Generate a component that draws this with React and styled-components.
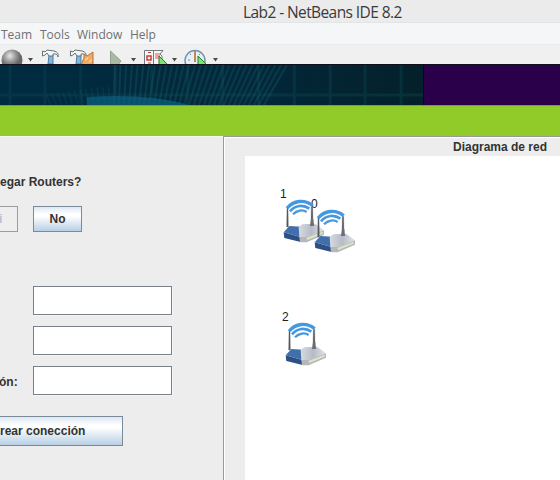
import React from 'react';
import styled, { createGlobalStyle } from 'styled-components';

const Global = createGlobalStyle`
  * { box-sizing: border-box; }
  body { margin: 0; overflow: hidden; font-family: "Liberation Sans", Arial, sans-serif; }
`;
const Window = styled.div`
  width: 560px; height: 480px; overflow: hidden; display: flex; flex-direction: column; background: #ededed;
`;
const TitleBar = styled.header`
  height: 23px; flex: none; background: #ebebeb; border-bottom: 1px solid #e3e4e6; padding-left: 243px;
  font: 15.5px/24px "Open Sans", "Noto Sans", sans-serif; letter-spacing: -0.59px; color: #3a3a3a; white-space: nowrap;
`;
const MenuBar = styled.nav`
  height: 22px; flex: none; display: flex; gap: 9px; padding-left: 1px; background: #f5f6f7;
  border-bottom: 1px solid #e9eaeb;
`;
const MenuItem = styled.span`
  width: ${p => p.$w}px; white-space: nowrap;
  font: 12px/23px "Open Sans", "Noto Sans", sans-serif; color: #707070;
`;
const ToolBar = styled.div`
  height: 19px; flex: none; background: #f0f0f0; overflow: hidden;
  svg { display: block; }
`;
const Banner = styled.div`
  height: 41px; flex: none; display: flex; background: #2b004b; border-top: 1px solid #10101c;
  svg { display: block; flex: none; border-right: 1px solid #0b0718; }
`;
const GreenStrip = styled.div`
  height: 31px; flex: none; background: #91cb2a; border-top: 1px solid #7b9f35;
`;
const Body = styled.main`
  flex: 1; display: flex; min-height: 0;
`;
const FormPanel = styled.section`
  width: 223px; flex: none; padding-top: 37px; overflow: hidden; border-top: 1px solid #f5f5f3;
`;
const Question = styled.div`
  font: bold 12px/16px "Liberation Sans", Arial, sans-serif; color: #333; white-space: nowrap;
`;
const ButtonRow = styled.div`
  display: flex; gap: 15px; margin-top: 16px;
`;
const Button = styled.button`
  width: ${p => p.$w}px; height: ${p => p.$h}px; padding: 0; border: 1px solid #7a8a99; border-radius: 0;
  border-left-width: ${p => (p.$cut ? 0 : 1)}px;
  background: linear-gradient(#dde8f3 0%, #fff 30%, #fff 38%, #b8cfe5 100%);
  font: bold 12px "Liberation Sans", Arial, sans-serif; color: #333; white-space: nowrap;
  &:disabled { background: #eee; border-color: #9c9c9c; color: #b8bfd0; text-align: left; text-indent: -1px; }
`;
const Fields = styled.div`
  display: flex; flex-direction: column; gap: 11px; margin-top: 54px;
`;
const FieldRow = styled.label`
  display: flex; height: 29px; align-items: center;
`;
const FieldLabel = styled.span`
  width: 33px; flex: none; font: bold 12px/16px "Liberation Sans", Arial, sans-serif; color: #333; padding-top: 2px;
  text-indent: -1px;
`;
const Input = styled.input`
  width: 139px; height: 29px; border: 1px solid #7a8087; background: #fff; padding: 0 4px;
  box-shadow: 1px 1px 0 #f5f5f5; outline: none;
`;
const CreateRow = styled.div`
  display: flex; margin-top: 21px;
  button { text-align: left; }
`;
const DiagramPanel = styled.section`
  flex: 1; min-width: 0; border-left: 1px solid #9b9b9b; border-top: 1px solid #999;
  box-shadow: inset 1px 1px 0 #fff; display: flex; flex-direction: column;
`;
const DiagramTitle = styled.h2`
  margin: 0; height: 19px; padding-left: 229px; font: bold 12px/20px "Liberation Sans", Arial, sans-serif; color: #333;
  white-space: nowrap;
`;
const Canvas = styled.div`
  position: relative; flex: 1; margin-left: 21px; background: #fff; overflow: hidden;
`;
const Node = styled.div`
  position: absolute; left: ${p => p.$x}px; top: ${p => p.$y}px;
  svg { display: block; }
`;
const NodeLabel = styled.span`
  position: absolute; left: ${p => p.$x}px; top: ${p => p.$y}px;
  font: 12px/14px "Liberation Sans", Arial, sans-serif; color: #222;
`;

const Router = () => (
  <svg width="44" height="54" viewBox="39 45 132 162">
    <defs>
      <linearGradient id="silver"><stop stopColor="#d7dae0" /><stop offset=".5" stopColor="#b7bbc7" /><stop offset="1" stopColor="#e3e5e7" /></linearGradient>
    </defs>
    <path d="M47 166L98 180V195L49 183Z" fill="#2c5086" />
    <path d="M47 166L64 147L114 150L98 180Z" fill="#416fab" />
    <path d="M92 149L103 142L141 140L168 160L116 181H94Z" fill="url(#silver)" />
    <path d="M94 180H116L168 160V173L116 196H96Z" fill="#b4b8b9" />
    <path d="M115 183L164 164V170L118 189Z" fill="#dbe7c5" />
    <path d="M57 92L56 150H61L60 92Z M130 88L129 145H135L134 88Z" fill="#50545c" stroke="#5c6068" strokeWidth="1" />
    <path d="M129 126L126 147H138L136 126Z" fill="#6a6e76" />
    <g fill="none" stroke="#4598df">
      <path d="M57 94C76 70 110 66 134 86" strokeWidth="10" />
      <path d="M66 103C82 84 106 82 124 95" strokeWidth="8" />
      <path d="M75 112C87 99 104 97 116 105" strokeWidth="7" />
    </g>
  </svg>
);

const GRID = [10, 45, 81, 116, 152, 188, 223, 259, 295, 331, 366, 402];

const Artwork = () => (
  <svg width="424" height="40" viewBox="0 0 424 40">
    <defs>
      <linearGradient id="night"><stop stopColor="#002b40" /><stop offset=".6" stopColor="#02283a" /><stop offset="1" stopColor="#04202a" /></linearGradient>
    </defs>
    <rect width="424" height="40" fill="url(#night)" />
    <g stroke="#0c4650" strokeWidth="3" opacity=".42">
      {GRID.map(x => <path key={x} d={`M${x} 0V40`} />)}
      <path d="M0 30H424" />
    </g>
    <path d="M87 40V32Q148 28 190 40Z" fill="#07506e" />
    <g stroke="#1c6670" strokeWidth="2" opacity=".3">
      {Array.from({ length: 31 }, (_, i) => {
        const x = 115 + i * 5.75;
        return <path key={i} d={`M${x} 0L${x - (x - 110) * 0.13} 40`} />;
      })}
    </g>
    <g fill="none" stroke="#1c6670" strokeWidth="1.5" opacity=".2">
      {Array.from({ length: 12 }, (_, i) => (
        <path key={i} d={`M${46 + i * 5.7} ${29 - i * 0.7}L${51 + i * 5.4} 40`} />
      ))}
    </g>
  </svg>
);

const Arrow = ({ x }) => <path d={`M${x} 13H${x + 5}L${x + 2.5} 16.5Z`} fill="#4b4b4b" />;
const Hammer = ({ x }) => (
  <g transform={`translate(${x} 0)`}>
    <path d="M7 10H11V19H6Z" fill="#79b9e6" stroke="#527c9b" />
    <path d="M.5 6V11L3 10L5 8L7 11H11V9Q15 8 16 12Q17 7 12 6L5 5L3 7Z" fill="#f6f7f7" stroke="#66737b" />
  </g>
);
const Cursor = ({ x }) => <path d={`M${x} 11L${x + 8} 19V21H${x}Z`} fill="#7be573" stroke="#237d29" />;

const Tools = () => (
  <svg width="560" height="19" viewBox="0 0 560 19">
    <defs>
      <radialGradient id="ball" cx=".4" cy=".3"><stop stopColor="#e8e8e8" /><stop offset=".5" stopColor="#a1a1a1" /><stop offset="1" stopColor="#666" /></radialGradient>
    </defs>
    <circle cx="12" cy="15" r="10.5" fill="url(#ball)" />
    <Arrow x={28} />
    <Hammer x={42} />
    <Hammer x={70} />
    <path d="M81 20L84 13V9L87 11L90 9L93 7V20Z" fill="#efac62" stroke="#b97532" />
    <path d="M85 15L88 13M89 17L92 15" stroke="#fff0ce" />
    <path d="M110.500 6L121 16L118 20H110.500Z" fill="#aab9a2" stroke="#93a48c" />
    <Arrow x={131} />
    <path d="M144.500 5.500H163L160 9L162 11V20H144.500Z" fill="#f7f6f4" stroke="#737980" />
    <path d="M153.500 5V19" stroke="#737980" />
    <path d="M147 11H151V15H147Z" fill="none" stroke="#c33b38" strokeWidth="1.500" />
    <path d="M148 7.500H151M148 18H151" stroke="#b7443d" />
    <path d="M155 8H160V14H155Z" fill="#f2a1a7" />
    <Cursor x={159} />
    <Arrow x={172} />
    <circle cx="195" cy="15.500" r="10" fill="#e8eff7" stroke="#7893ac" strokeWidth="1.500" />
    <path d="M195 6V17" stroke="#c78554" strokeWidth="2" />
    <path d="M188 15H190M190 9L191 10M200 9L199 10" stroke="#6c8fac" />
    <Cursor x={198} />
    <Arrow x={213} />
  </svg>
);

export default function App() {
  return (
    <Window>
      <Global />
      <TitleBar>Lab2 - NetBeans IDE 8.2</TitleBar>
      <MenuBar>
        <MenuItem $w={30}>Team</MenuItem>
        <MenuItem $w={28}>Tools</MenuItem>
        <MenuItem $w={44}>Window</MenuItem>
        <MenuItem $w={30}>Help</MenuItem>
      </MenuBar>
      <ToolBar><Tools /></ToolBar>
      <Banner><Artwork /></Banner>
      <GreenStrip />
      <Body>
        <FormPanel>
          <Question>egar Routers?</Question>
          <ButtonRow>
            <Button $w={18} $h={26} $cut disabled>i</Button>
            <Button $w={49} $h={26}>No</Button>
          </ButtonRow>
          <Fields>
            <FieldRow><FieldLabel /><Input /></FieldRow>
            <FieldRow><FieldLabel /><Input /></FieldRow>
            <FieldRow><FieldLabel>ón:</FieldLabel><Input /></FieldRow>
          </Fields>
          <CreateRow><Button $w={123} $h={30} $cut>rear conección</Button></CreateRow>
        </FormPanel>
        <DiagramPanel>
          <DiagramTitle>Diagrama de red</DiagramTitle>
          <Canvas>
            <NodeLabel $x={35} $y={31}>1</NodeLabel>
            <NodeLabel $x={66} $y={41}>0</NodeLabel>
            <NodeLabel $x={37} $y={154}>2</NodeLabel>
            <Node $x={36} $y={36}><Router /></Node>
            <Node $x={67} $y={46}><Router /></Node>
            <Node $x={38} $y={159}><Router /></Node>
          </Canvas>
        </DiagramPanel>
      </Body>
    </Window>
  );
}
